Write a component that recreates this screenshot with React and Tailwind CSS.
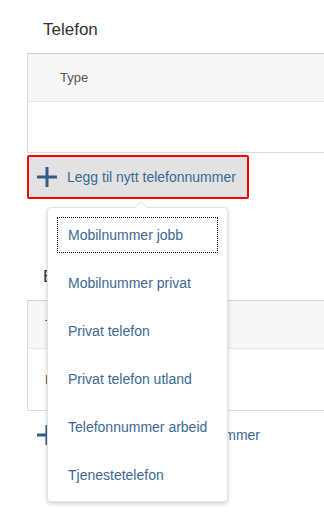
import React from 'react';

const PlusIcon = ({ className }) => (
  <svg className={className} width="20" height="20" viewBox="0 0 20 20">
    <path d="M10 0 V20 M0 10 H20" stroke="currentColor" strokeWidth="3" fill="none" />
  </svg>
);

const Section = ({ title, headerText, bodyText, bodyHeight, headerPad, addLabel, highlighted }) => (
  <div>
    <h2 className="pl-[43px] text-[17px] leading-[20px] text-[#333]">{title}</h2>
    <div className="mt-[13px] ml-[27px] w-[340px] border-l border-l-[#dcdcdc] border-t border-t-[#cfcfcf] border-b border-b-[#dcdcdc]">
      <div className={`h-[48px] flex items-center bg-[#f7f7f7] border-b border-[#e6e6e6] text-[13px] text-[#555] ${headerPad}`}>
        {headerText}
      </div>
      <div className={`flex items-center text-[13px] text-[#555] ${headerPad} ${bodyHeight}`}>{bodyText}</div>
    </div>
    <button
      className={`mt-[2px] ml-[27px] h-[44px] flex items-center gap-[10px] pl-[8px] pr-[11px] rounded-[2px] text-[14px] text-[#3a6893] ${
        highlighted ? 'border-2 border-[#ff0000] bg-[#e2e2e2]' : 'border-2 border-transparent'
      }`}
    >
      <PlusIcon className="text-[#355d83]" />
      <span>{addLabel}</span>
    </button>
  </div>
);

const items = [
  'Mobilnummer jobb',
  'Mobilnummer privat',
  'Privat telefon',
  'Privat telefon utland',
  'Telefonnummer arbeid',
  'Tjenestetelefon',
];

export default function App() {
  return (
    <div
      className="relative w-[324px] h-[515px] overflow-hidden bg-white"
      style={{ fontFamily: '"Liberation Sans", Arial, sans-serif' }}
    >
      <div className="pt-[20px]">
        <Section
          title="Telefon"
          headerText="Type"
          bodyText=""
          bodyHeight="h-[50px]"
          headerPad="pl-[32px]"
          addLabel="Legg til nytt telefonnummer"
          highlighted
        />
        <div className="mt-[68px]">
          <Section
            title="E-post"
            headerText="Type"
            bodyText="Hjem"
            bodyHeight="h-[61px]"
            headerPad="pl-[17px]"
            addLabel="Legg til nytt nødtelefonnummer"
          />
        </div>
      </div>

      <div className="absolute left-[47px] top-[207px] w-[181px] h-[295px] bg-white border border-[#e2e2e2] rounded-[4px] shadow-[0_2px_4px_rgba(0,0,0,0.18)] py-[3px]">
        <div className="absolute left-[86px] top-[-7px] w-0 h-0 border-l-[7px] border-r-[7px] border-b-[7px] border-l-transparent border-r-transparent border-b-[#e2e2e2]" />
        <div className="absolute left-[87px] top-[-6px] w-0 h-0 border-l-[6px] border-r-[6px] border-b-[6px] border-l-transparent border-r-transparent border-b-white" />
        {items.map((item, i) => (
          <div key={i} className="h-[48px] px-[9px] pt-[6px]">
            <div
              className={`h-[36px] flex items-center pl-[10px] text-[14px] text-[#3a6893] border ${
                i === 0 ? 'border-dotted border-black' : 'border-transparent'
              }`}
            >
              {item}
            </div>
          </div>
        ))}
      </div>
    </div>
  );
}
